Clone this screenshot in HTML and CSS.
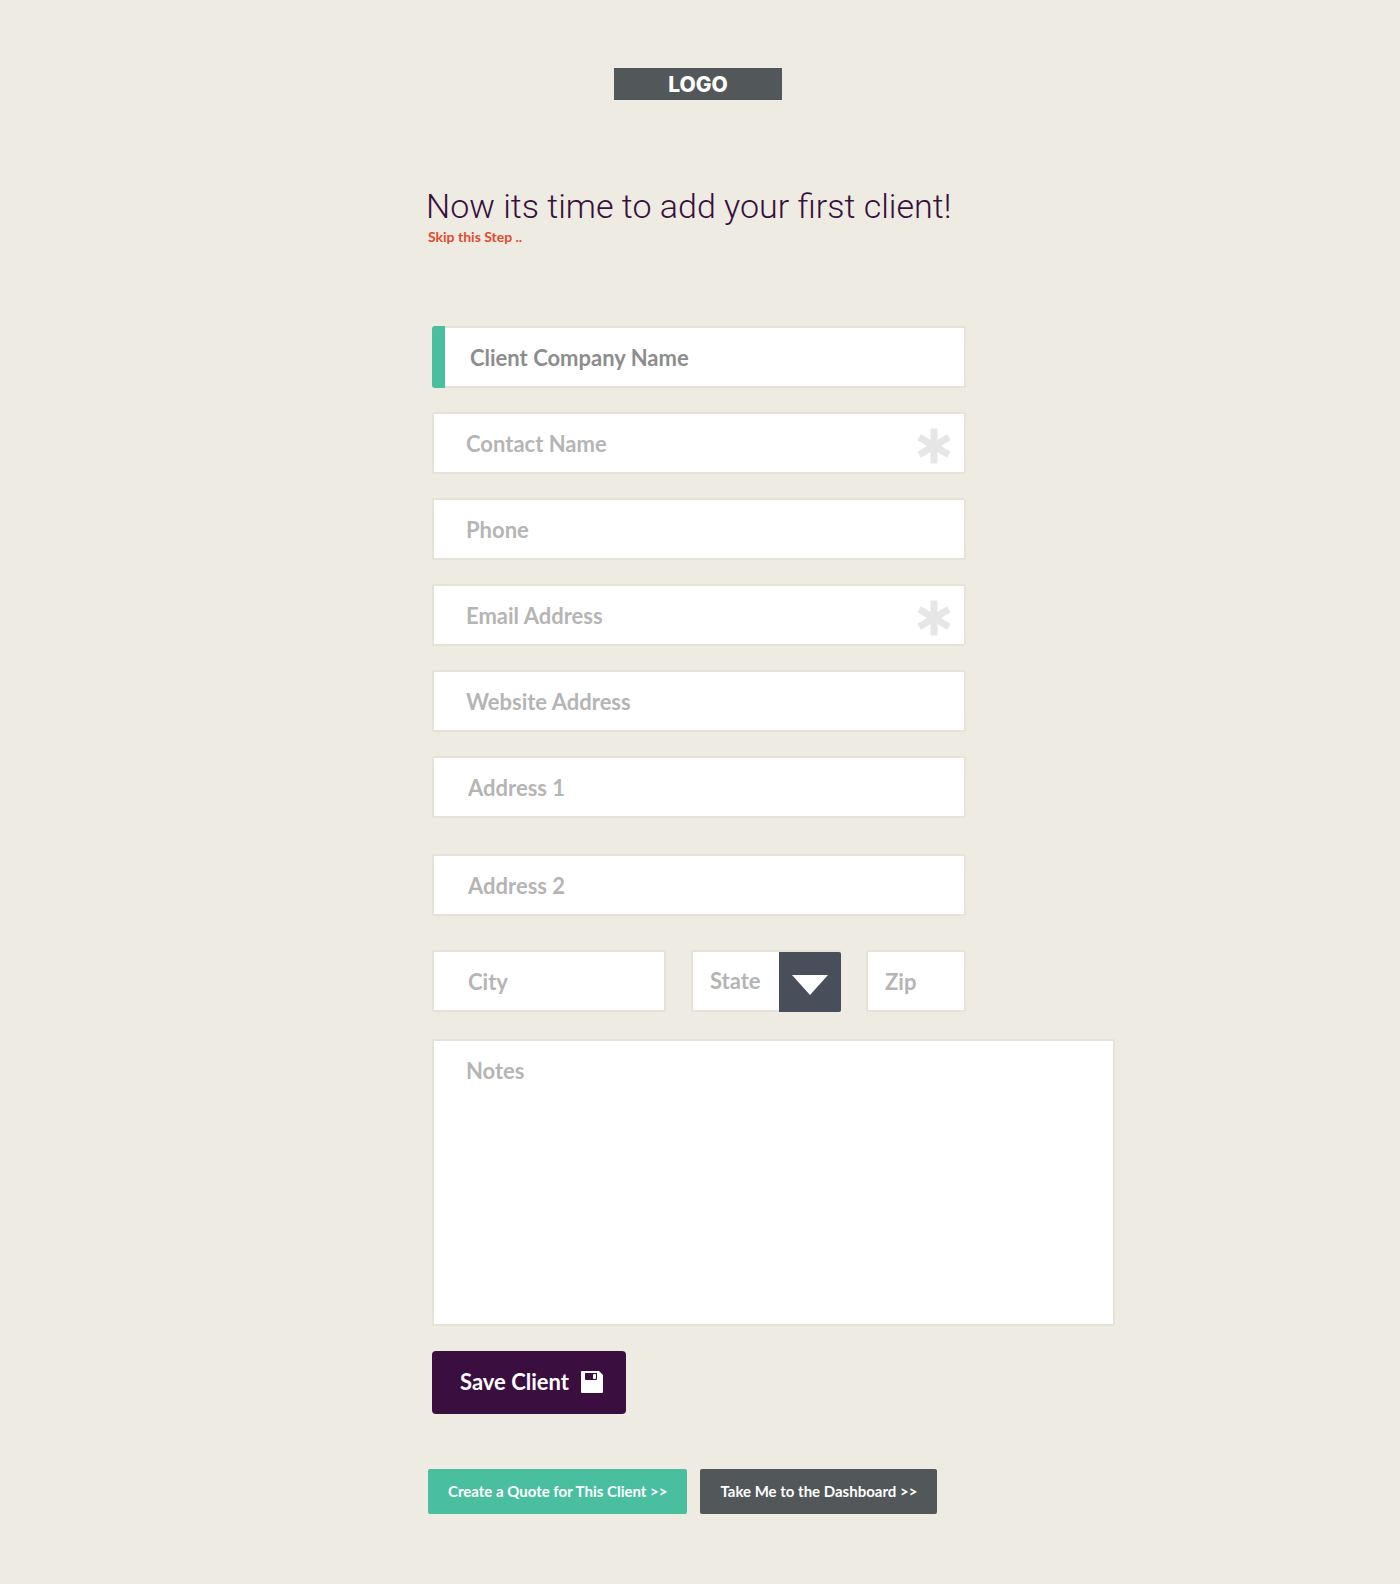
FILE: index.html
```html
<!DOCTYPE html>
<html lang="en">
<head>
<meta charset="utf-8">
<meta name="viewport" content="width=device-width, initial-scale=1">
<title>Add your first client</title>
<link rel="stylesheet" href="styles.css">
</head>
<body>
<main class="page">
  <div class="logo">LOGO</div>
  <header class="intro">
    <h1 class="title">Now its time to add your first client!</h1>
    <a class="skip" href="#dashboard">Skip this Step ..</a>
  </header>

  <form class="client-form">
    <div class="stack">
      <div class="field field-active">
        <input class="control" type="text" aria-label="Client Company Name" placeholder="Client Company Name">
      </div>
      <div class="field">
        <input class="control" type="text" aria-label="Contact Name" placeholder="Contact Name" required>
        <svg class="required" viewBox="0 0 34 36" aria-hidden="true"><path d="M17 .5v35M2.200 9.300l29.600 17.400M31.800 9.300L2.200 26.700"/></svg>
      </div>
      <div class="field">
        <input class="control" type="tel" aria-label="Phone" placeholder="Phone">
      </div>
      <div class="field">
        <input class="control" type="email" aria-label="Email Address" placeholder="Email Address" required>
        <svg class="required" viewBox="0 0 34 36" aria-hidden="true"><path d="M17 .5v35M2.200 9.300l29.600 17.400M31.800 9.300L2.200 26.700"/></svg>
      </div>
      <div class="field">
        <input class="control" type="text" aria-label="Website Address" placeholder="Website Address">
      </div>
      <div class="field">
        <input class="control control-address" type="text" aria-label="Address 1" placeholder="Address 1">
      </div>
    </div>
    <div class="field address-second">
      <input class="control control-address" type="text" aria-label="Address 2" placeholder="Address 2">
    </div>
    <div class="locality">
      <div class="field city">
        <input class="control control-address" type="text" aria-label="City" placeholder="City">
      </div>
      <div class="field state">
        <select class="control control-narrow" aria-label="State">
          <option>State</option>
        </select>
        <span class="state-arrow"><svg width="36" height="20" viewBox="0 0 36 20" aria-hidden="true"><path d="M0 0h36L18 20z" fill="#fff"/></svg></span>
      </div>
      <div class="field zip">
        <input class="control control-narrow" type="text" aria-label="Zip" placeholder="Zip">
      </div>
    </div>
    <textarea class="control notes" aria-label="Notes" placeholder="Notes"></textarea>
    <button class="save" type="submit">Save Client
      <svg width="22" height="22" viewBox="0 0 22 22" aria-hidden="true"><path fill="#fff" fill-rule="evenodd" d="M1 0h17l4 4v17a1 1 0 0 1-1 1H1a1 1 0 0 1-1-1V1a1 1 0 0 1 1-1zM4 2v6q0 1 1 1h10q1 0 1-1V2zM13 3h1q1 0 1 1v3q0 1-1 1h-1q-1 0-1-1V4q0-1 1-1z"/></svg>
    </button>
  </form>

  <nav class="next">
    <a class="next-link next-quote" href="#quote">Create a Quote for This Client &gt;&gt;</a>
    <a class="next-link next-dashboard" href="#dashboard">Take Me to the Dashboard &gt;&gt;</a>
  </nav>
</main>
</body>
</html>
```
FILE: styles.css
```css
* {
  box-sizing: border-box;
}

body {
  margin: 0;
  padding: 68px 20px 70px 16px;
  background: #eeebe2;
  font-family: Lato, "Open Sans", sans-serif;
}

.page {
  max-width: 540px;
  margin: 0 auto;
}

.logo {
  width: 168px;
  margin: 0 auto;
  padding-top: 2px;
  background: #525759;
  color: #fff;
  font-family: Inter, Lato, sans-serif;
  font-size: 21px;
  font-weight: 800;
  line-height: 30px;
  text-align: center;
}

.intro {
  margin-top: 86px;
}

.title {
  margin: 0 0 0 -2px;
  color: #370f3e;
  font-family: Roboto, Lato, sans-serif;
  font-size: 34px;
  font-weight: 300;
  line-height: 41px;
  white-space: nowrap;
}

.skip {
  display: block;
  width: fit-content;
  color: #e04b2d;
  font-size: 14px;
  font-weight: 700;
  line-height: 20px;
  text-decoration: none;
}

.client-form {
  margin: 79px 2px 0 4px;
}

.stack {
  display: grid;
  gap: 24px;
}

.field {
  position: relative;
}

.control {
  display: block;
  width: 100%;
  height: 62px;
  margin: 0;
  padding: 0 32px;
  border: 2px solid #e5e3d7;
  border-radius: 2px;
  outline: 0;
  background: #fff;
  color: #b5b5b5;
  font-family: inherit;
  font-size: 22px;
  font-weight: 700;
  line-height: 28px;
  appearance: none;
}

.control::placeholder {
  color: #b5b5b5;
  opacity: 1;
}

.control-address {
  padding: 0 34px;
}

.control-narrow {
  padding: 0 17px;
}

.field-active {
  display: flex;
}

.field-active::before {
  content: "";
  flex: 0 0 13px;
  border-radius: 3px 0 0 3px;
  background: #49bf9f;
}

.field-active .control {
  flex: 1;
  padding-left: 25px;
  border-left: 0;
  border-radius: 0 2px 2px 0;
}

.field-active .control::placeholder {
  color: #8d8d8d;
}

.required {
  position: absolute;
  top: 16px;
  right: 15px;
  width: 34px;
  height: 36px;
  fill: none;
  stroke: #e6e6e6;
  stroke-width: 7;
}

.address-second {
  margin-top: 36px;
}

.locality {
  display: flex;
  gap: 25px;
  margin-top: 34px;
}

.city {
  flex: 1;
}

.state {
  flex: 0 0 150px;
}

.zip {
  flex: 0 0 100px;
}

.state-arrow {
  position: absolute;
  top: 2px;
  right: 0;
  bottom: 0;
  display: grid;
  place-items: center;
  width: 62px;
  padding-top: 6px;
  border-radius: 0 2px 2px 0;
  background: #484e5a;
  pointer-events: none;
}

.notes {
  width: calc(100% + 149px);
  height: 287px;
  margin-top: 27px;
  padding-top: 16px;
  resize: none;
}

.save {
  display: flex;
  align-items: center;
  gap: 12px;
  height: 63px;
  margin-top: 25px;
  padding: 0 23px 2px 28px;
  border: 0;
  border-radius: 4px;
  background: #3a0f40;
  color: #fff;
  font-family: inherit;
  font-size: 22px;
  font-weight: 700;
}

.next {
  display: flex;
  flex-wrap: wrap;
  gap: 13px;
  margin-top: 55px;
}

.next-link {
  padding: 0 20px;
  border-radius: 2px;
  color: #fff;
  font-size: 15px;
  font-weight: 700;
  line-height: 45px;
  text-decoration: none;
}

.next-quote {
  background: #49bf9f;
}

.next-dashboard {
  background: #525759;
}
```
